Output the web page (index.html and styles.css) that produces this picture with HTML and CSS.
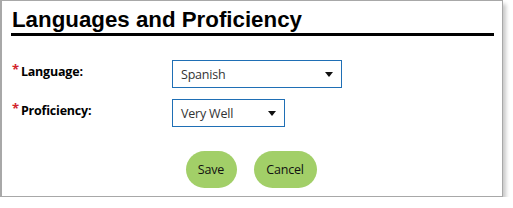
FILE: index.html
```html
<!DOCTYPE html>
<html>
<head>
<meta charset="utf-8">
<link rel="stylesheet" href="styles.css">
</head>
<body>
<div class="panel">
  <h1 class="title">Languages and Proficiency</h1>
  <div class="form">
    <div class="row">
      <label class="label"><span class="req">*</span>Language:</label>
      <div class="select wide"><span>Spanish</span><span class="caret"></span></div>
    </div>
    <div class="row">
      <label class="label"><span class="req">*</span>Proficiency:</label>
      <div class="select narrow"><span>Very Well</span><span class="caret"></span></div>
    </div>
  </div>
  <div class="actions">
    <button class="btn save">Save</button>
    <button class="btn cancel">Cancel</button>
  </div>
</div>
</body>
</html>
```
FILE: styles.css
```css
html, body { margin: 0; padding: 0; background: #fff; }
.panel {
  width: 500px;
  height: 195px;
  border: 1px solid #a8a8a8;
  border-left-width: 2px;
  box-shadow: 3px 4px 4px rgba(0,0,0,0.22);
  box-sizing: content-box;
}
.title {
  margin: 8px 8px 0 9px;
  font-family: "Liberation Sans", Arial, sans-serif;
  font-weight: bold;
  font-size: 22.3px;
  line-height: 22px;
  padding: 0 0 2px 1px;
  color: #000;
  border-bottom: 3px solid #000;
}
.form {
  margin-top: 24px;
  display: flex;
  flex-direction: column;
  gap: 11px;
}
.row { display: flex; align-items: flex-start; }
.label {
  width: 160px;
  padding-left: 10px;
  font-family: "Open Sans", "Noto Sans", sans-serif;
  font-weight: bold;
  font-size: 12.5px;
  color: #000;
  line-height: 16px;
  padding-top: 3px;
  letter-spacing: -0.2px;
}
.req { color: #d2232a; font-size: 13px; margin-right: 2px; position: relative; top: -2px; }
.select {
  height: 28px;
  box-sizing: border-box;
  border: 1px solid #1f6fb5;
  display: flex;
  align-items: center;
  justify-content: space-between;
  padding: 0 8px 0 8px;
  font-family: "Open Sans", "Noto Sans", sans-serif;
  font-size: 12.5px;
  color: #333;
  letter-spacing: -0.2px;
}
.wide { width: 170px; }
.narrow { width: 113px; }
.caret {
  width: 0; height: 0;
  border-left: 4px solid transparent;
  border-right: 4px solid transparent;
  border-top: 5px solid #111;
  margin-top: 1px;
}
.actions {
  margin-top: 24px;
  display: flex;
  justify-content: center;
  gap: 17px;
  padding-right: 2px;
}
.btn {
  height: 37px;
  border: none;
  border-radius: 19px;
  background: #a2cf68;
  font-family: "Open Sans", "Noto Sans", sans-serif;
  font-size: 12.5px;
  color: #111;
  padding: 0;
  letter-spacing: -0.2px;
}
.save { width: 51px; }
.cancel { width: 63px; }
```
